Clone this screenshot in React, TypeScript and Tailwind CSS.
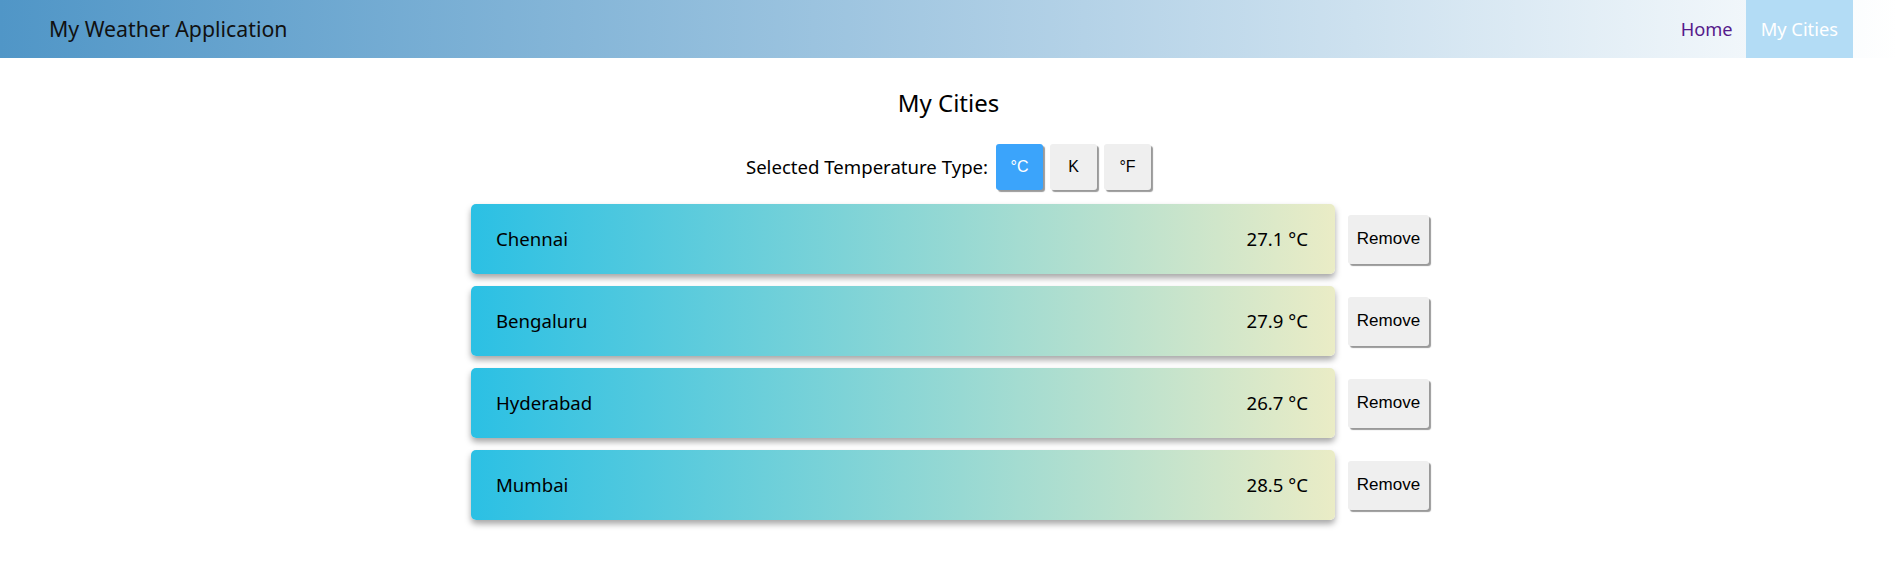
import React, { useState } from "react";

const cities = [
  { name: "Chennai", temp: "27.1 °C" },
  { name: "Bengaluru", temp: "27.9 °C" },
  { name: "Hyderabad", temp: "26.7 °C" },
  { name: "Mumbai", temp: "28.5 °C" },
];

export default function App() {
  const [unit] = useState("C");
  return (
    <div className="min-h-[569px] bg-white text-black" style={{ fontFamily: '"Noto Sans", sans-serif' }}>
      <header className="flex h-[58px] items-center justify-between bg-[linear-gradient(to_right,#5096c7,#ffffff)] pl-[49px] pr-[44px]">
        <div className="text-[21.3px] text-[#111]">My Weather Application</div>
        <nav className="flex h-full items-stretch text-[18.3px]">
          <a className="flex items-center px-[13px] text-[#551a8b]">Home</a>
          <a className="flex items-center bg-[#b3dcf5] px-[15px] text-white">My Cities</a>
        </nav>
      </header>
      <main className="flex flex-col items-center">
        <h2 className="mt-[29px] text-[24px] leading-[32px]">My Cities</h2>
        <div className="mt-[25px] flex items-center gap-[7px] text-[18.6px]">
          <span className="mr-[1px]">Selected Temperature Type:</span>
          {["°C", "K", "°F"].map((u) => (
            <button
              key={u}
              className={`h-[46px] w-[47px] rounded-[3px] text-[16px] shadow-[2px_2px_1px_#999] ${
                u === "°" + unit ? "bg-[#3ba4fb] text-white" : "bg-[#efefef] text-black"
              }`}
              style={{ fontFamily: '"Liberation Sans", Arial, sans-serif' }}
            >
              {u}
            </button>
          ))}
        </div>
        <div className="mt-[14px] flex flex-col gap-[12px] pl-[3px]">
          {cities.map((c) => (
            <div key={c.name} className="flex items-center gap-[13px]">
              <div className="flex h-[70px] w-[864px] items-center justify-between rounded-[5px] bg-[linear-gradient(to_right,#2bc0e4,#eaecc6)] pl-[25px] pr-[27px] text-[18.6px] shadow-[0_4px_6px_rgba(0,0,0,0.35)]">
                <span>{c.name}</span>
                <span>{c.temp}</span>
              </div>
              <button
                className="h-[49px] w-[81px] rounded-[3px] bg-[#efefef] text-[17px] shadow-[2px_2px_1px_#999]"
                style={{ fontFamily: '"Liberation Sans", Arial, sans-serif' }}
              >
                Remove
              </button>
            </div>
          ))}
        </div>
      </main>
    </div>
  );
}
